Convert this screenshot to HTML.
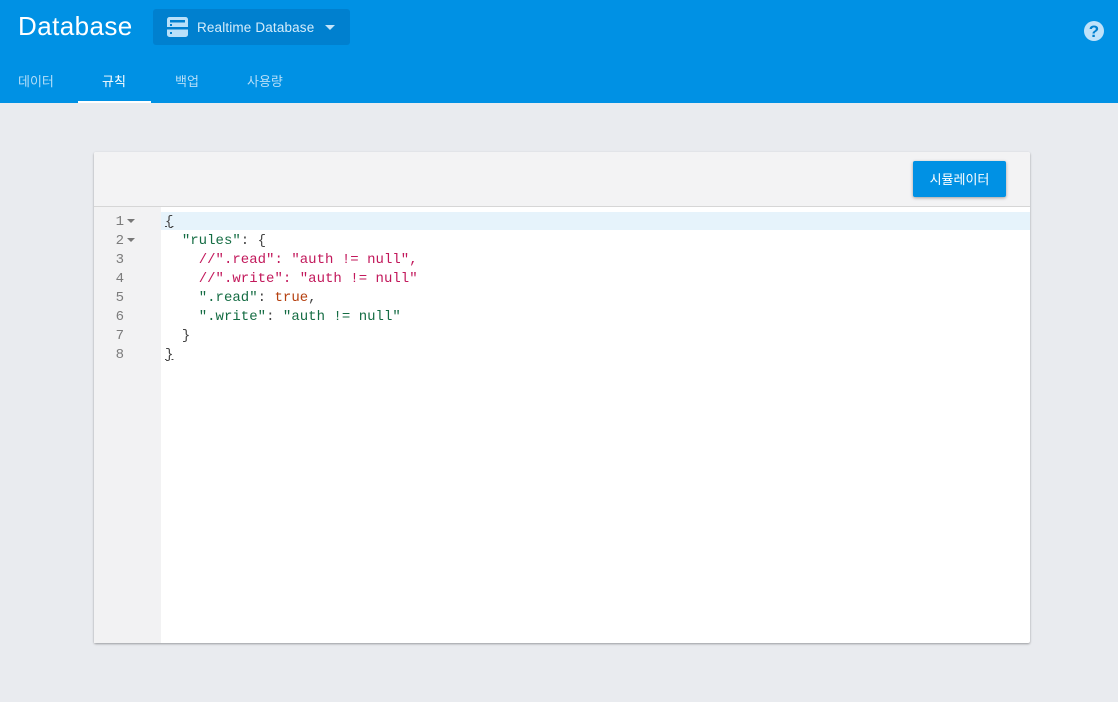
<!DOCTYPE html>
<html><head><meta charset="utf-8">
<style>
html,body{margin:0;padding:0}
body{width:1118px;height:702px;overflow:hidden;background:#e9ebef;position:relative;font-family:"Liberation Sans","Noto Sans CJK KR",sans-serif}
.hdr{position:absolute;left:0;top:0;width:1118px;height:103px;background:#0091e4}
.a{position:absolute;white-space:nowrap}
.title{left:18px;top:9px;font-size:26px;line-height:34px;color:#fff;letter-spacing:.42px}
.sel{left:153px;top:9px;width:197px;height:36px;background:#0080cf;border-radius:3px}
.tab{top:73px;font-size:13px;line-height:18px;color:#b5def8}
.ind{left:78px;top:101px;width:73px;height:2px;background:#fff}
.card{left:94px;top:152px;width:936px;height:491px;background:#fff;border-radius:2px;box-shadow:0 1px 2px rgba(0,0,0,.35)}
.bar{left:0;top:0;width:936px;height:54px;background:#f3f3f4;border-bottom:1px solid #d6d6d6;border-radius:2px 2px 0 0}
.btn{left:819px;top:9px;width:93px;height:36px;background:#0091e4;border-radius:2px;color:#fff;font-size:13px;line-height:37px;text-align:center;box-shadow:0 1px 3px rgba(0,0,0,.35)}
.gut{left:0;top:55px;width:67px;height:436px;background:#f2f2f3}
.hl{left:67px;top:60px;width:869px;height:18px;background:#e6f3fb}
.ln{left:0;width:30px;text-align:right;font:14px/19px "Liberation Mono",monospace;color:#7c7c7c}
.cd{left:71px;font:14px/19px "Liberation Mono",monospace;color:#444;white-space:pre;letter-spacing:.02px}
.g{color:#146c43}.r{color:#c2185b}.o{color:#b5400f}
u{text-decoration:underline}
.arr{left:33px;width:0;height:0;border-left:4px solid transparent;border-right:4px solid transparent;border-top:4px solid #777}
</style></head>
<body>
<div class="a hdr">
<div class="a title">Database</div>
<div class="a sel">
<svg class="a" style="left:14px;top:8px" width="21" height="20" viewBox="0 0 21 20"><path fill="#b9e0fa" d="M2.500 0h16A2.500 2.500 0 0 1 21 2.500V10H0V2.500A2.500 2.500 0 0 1 2.500 0zM0 12.500h21v5a2.500 2.500 0 0 1-2.500 2.500h-16A2.500 2.500 0 0 1 0 17.500z"/><rect x="3" y="3" width="15" height="2.500" fill="#0080cf"/><rect x="3" y="7" width="2" height="2" fill="#0080cf"/><rect x="3" y="15" width="2" height="2" fill="#0080cf"/></svg>
<div class="a" style="left:44px;top:10px;font-size:13.500px;line-height:18px;color:#d4ecfb;letter-spacing:.15px">Realtime Database</div>
<div class="a" style="left:172px;top:16px;width:0;height:0;border-left:5px solid transparent;border-right:5px solid transparent;border-top:5px solid #c4e4fa"></div>
</div>
<svg class="a" style="left:1084px;top:21px" width="20" height="20" viewBox="0 0 20 20"><circle cx="10" cy="10" r="10" fill="#bfe2fa"/><text x="10" y="16" text-anchor="middle" font-family="Liberation Sans" font-weight="bold" font-size="17" fill="#0080cf">?</text></svg>
<div class="a tab" style="left:18px">데이터</div>
<div class="a tab" style="left:102px;color:#fff">규칙</div>
<div class="a tab" style="left:175px">백업</div>
<div class="a tab" style="left:247px">사용량</div>
<div class="a ind"></div>
</div>
<div class="a card">
<div class="a bar"></div>
<div class="a btn">시뮬레이터</div>
<div class="a gut"></div>
<div class="a hl"></div>
<div class="a ln" style="top:61px">1</div><div class="a arr" style="top:67px"></div>
<div class="a ln" style="top:80px">2</div><div class="a arr" style="top:86px"></div>
<div class="a ln" style="top:99px">3</div>
<div class="a ln" style="top:118px">4</div>
<div class="a ln" style="top:137px">5</div>
<div class="a ln" style="top:156px">6</div>
<div class="a ln" style="top:175px">7</div>
<div class="a ln" style="top:194px">8</div>
<div class="a cd" style="top:61px"><u>{</u></div>
<div class="a cd" style="top:80px">  <span class="g">"rules"</span>: {</div>
<div class="a cd" style="top:99px">    <span class="r">//".read": "auth != null",</span></div>
<div class="a cd" style="top:118px">    <span class="r">//".write": "auth != null"</span></div>
<div class="a cd" style="top:137px">    <span class="g">".read"</span>: <span class="o">true</span>,</div>
<div class="a cd" style="top:156px">    <span class="g">".write"</span>: <span class="g">"auth != null"</span></div>
<div class="a cd" style="top:175px">  }</div>
<div class="a cd" style="top:194px"><u>}</u></div>
</div>
</body></html>
